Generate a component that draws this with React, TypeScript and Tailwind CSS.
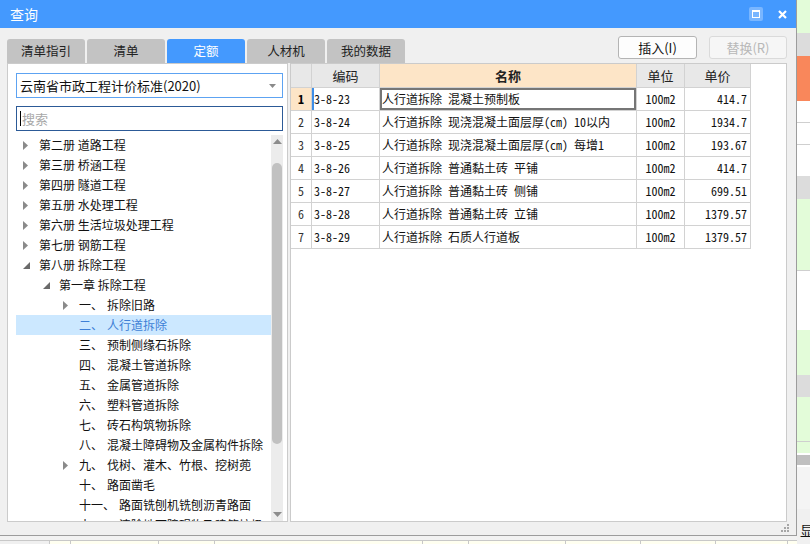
import React from 'react';

const ui = "font-['Noto_Sans_CJK_SC','Noto_Sans',sans-serif]";
const mono = "font-['Noto_Sans_Mono_CJK_SC','Liberation_Mono','Noto_Sans_CJK_SC',monospace]";

type Node = { lvl: number; arrow?: 'right' | 'down'; pre?: string; text: string; sel?: boolean };

const tree: Node[] = [
  { lvl: 0, arrow: 'right', text: '第二册 道路工程' },
  { lvl: 0, arrow: 'right', text: '第三册 桥涵工程' },
  { lvl: 0, arrow: 'right', text: '第四册 隧道工程' },
  { lvl: 0, arrow: 'right', text: '第五册 水处理工程' },
  { lvl: 0, arrow: 'right', text: '第六册 生活垃圾处理工程' },
  { lvl: 0, arrow: 'right', text: '第七册 钢筋工程' },
  { lvl: 0, arrow: 'down', text: '第八册 拆除工程' },
  { lvl: 1, arrow: 'down', text: '第一章 拆除工程' },
  { lvl: 2, arrow: 'right', pre: '一、', text: '拆除旧路' },
  { lvl: 2, pre: '二、', text: '人行道拆除', sel: true },
  { lvl: 2, pre: '三、', text: '预制侧缘石拆除' },
  { lvl: 2, pre: '四、', text: '混凝土管道拆除' },
  { lvl: 2, pre: '五、', text: '金属管道拆除' },
  { lvl: 2, pre: '六、', text: '塑料管道拆除' },
  { lvl: 2, pre: '七、', text: '砖石构筑物拆除' },
  { lvl: 2, pre: '八、', text: '混凝土障碍物及金属构件拆除' },
  { lvl: 2, arrow: 'right', pre: '九、', text: '伐树、灌木、竹根、挖树蔸' },
  { lvl: 2, pre: '十、', text: '路面凿毛' },
  { lvl: 2, pre: '十一、', text: '路面铣刨机铣刨沥青路面' },
  { lvl: 2, pre: '十二、', text: '清除地面障碍物及建筑垃圾' },
];

const rows = [
  ['3-8-23', '人行道拆除 混凝土预制板', '414.7'],
  ['3-8-24', '人行道拆除 现浇混凝土面层厚(cm) 10以内', '1934.7'],
  ['3-8-25', '人行道拆除 现浇混凝土面层厚(cm) 每增1', '193.67'],
  ['3-8-26', '人行道拆除 普通黏土砖 平铺', '414.7'],
  ['3-8-27', '人行道拆除 普通黏土砖 侧铺', '699.51'],
  ['3-8-28', '人行道拆除 普通黏土砖 立铺', '1379.57'],
  ['3-8-29', '人行道拆除 石质人行道板', '1379.57'],
];

const indent = ['pl-[7px]', 'pl-[27px]', 'pl-[47px]'];

function Arrow({ dir }: { dir?: 'right' | 'down' }) {
  return (
    <span className="w-[16px] h-[20px] flex items-center">
      {dir === 'right' && (
        <svg width="5" height="9" viewBox="0 0 5 9">
          <path d="M0 0 L5 4.5 L0 9 Z" fill="#8a8a8a" />
        </svg>
      )}
      {dir === 'down' && (
        <svg width="7" height="7" viewBox="0 0 7 7">
          <path d="M7 0 L7 7 L0 7 Z" fill="#6a6a6a" />
        </svg>
      )}
    </span>
  );
}

const tabs = ['清单指引', '清单', '定额', '人材机', '我的数据'];

const strip: [string, number][] = [
  ['bg-[#e3fcd9]', 33], ['bg-[#dcdcdc]', 23], ['bg-[#f9875b]', 45], ['bg-white border-b border-[#cfcfcf]', 22],
  ['bg-white border-b border-[#cfcfcf]', 22], ['bg-white', 31], ['bg-[#dcdcdc]', 23], ['bg-[#e3fcd9] border-b border-[#cfcfcf]', 72],
  ['bg-white', 59], ['bg-[#e3fcd9]', 45], ['bg-[#dcdcdc]', 22], ['bg-[#e3fcd9] border-b border-[#cfcfcf]', 45],
  ['bg-[#e3fcd9]', 11], ['bg-white', 2], ['bg-[#c0c0c0]', 10], ['bg-white', 2], ['bg-[#f4f4f4]', 42],
];

export default function App() {
  return (
    <div className={`w-[810px] h-[544px] overflow-hidden flex bg-[#f0f0f0] ${ui}`}>
      <div className="w-[797px] flex flex-col">
        {/* dialog */}
        <div className="h-[536px] flex flex-col border-r border-b border-[#9c9c9c] bg-[#f0f0f0]">
          <div className="h-[28px] bg-[#4499fe] flex items-center pl-[10px] pr-[9px] shrink-0">
            <span className="text-white text-[14px]">查询</span>
            <div className="ml-auto w-[14px] h-[14px] rounded-[2px] bg-[#79b6ff] flex items-center justify-center">
              <div className="w-[8px] h-[8px] border-[1.5px] border-t-[2.5px] border-white" />
            </div>
            <svg className="ml-[15px]" width="9" height="9" viewBox="0 0 9 9">
              <path d="M1 1 L8 8 M8 1 L1 8" stroke="white" strokeWidth="2.2" />
            </svg>
          </div>
          <div className="flex-1 flex flex-col pl-[7px] pr-[9px]">
            <div className="h-[35px] flex justify-between shrink-0">
              <div className="self-end flex gap-[2px]">
                {tabs.map((t, i) => (
                  <div
                    key={t}
                    className={`w-[78px] h-[24px] rounded-t-[3px] flex items-center justify-center text-[12.5px] ${
                      i === 2 ? 'bg-[#4499fe] text-white' : 'bg-[#c3c3c3] text-[#222]'
                    }`}
                  >
                    {t}
                  </div>
                ))}
              </div>
              <div className="mt-[8px] flex gap-[12px]">
                <div className="w-[79px] h-[23px] rounded-[3px] border border-[#b4b4b4] bg-[#fdfdfd] flex items-center justify-center text-[13px] text-[#111]">
                  插入(I)
                </div>
                <div className="w-[78px] h-[23px] rounded-[3px] border border-[#dadada] bg-[#f6f6f6] flex items-center justify-center text-[13px] text-[#b8b8b8]">
                  替换(R)
                </div>
              </div>
            </div>
            <div className="h-[459px] flex gap-[2px] shrink-0">
              {/* left panel */}
              <div className="w-[281px] bg-white border border-[#cbcbcb] flex flex-col pl-[8px] pr-[4px] pt-[9px] overflow-hidden">
                <div className="h-[25px] border border-[#5da3f2] flex items-center pl-[3px] pr-[6px] text-[13px] text-[#111] shrink-0">
                  <span>云南省市政工程计价标准(2020)</span>
                  <svg className="ml-auto" width="7" height="4" viewBox="0 0 7 4">
                    <path d="M0 0 L7 0 L3.5 4 Z" fill="#8a8a8a" />
                  </svg>
                </div>
                <div className="h-[25px] mt-[8px] border border-[#2c5a97] flex items-center pl-[3px] text-[13px] text-[#a8a8a8] shrink-0">
                  <span className="w-[1px] h-[15px] bg-black mr-[1px]" />
                  搜索
                </div>
                <div className="mt-[4px] flex-1 flex min-h-0">
                  <div className="flex-1 overflow-hidden">
                    {tree.map((n, i) => (
                      <div
                        key={i}
                        className={`h-[20px] flex items-center whitespace-nowrap text-[12px] ${indent[n.lvl]} ${
                          n.sel ? 'bg-[#cce8ff] text-[#3d7fd6]' : 'text-[#111]'
                        }`}
                      >
                        <Arrow dir={n.arrow} />
                        {n.pre && <span>{n.pre}</span>}
                        <span className={n.pre ? 'ml-[4px]' : ''}>{n.text}</span>
                      </div>
                    ))}
                  </div>
                  <div className="w-[12px] bg-[#ececec] flex flex-col items-center">
                    <svg className="mt-[4px]" width="9" height="5" viewBox="0 0 9 5">
                      <path d="M0 5 L4.5 0 L9 5 Z" fill="#8c8c8c" />
                    </svg>
                    <div className="mt-[19px] w-[10px] h-[281px] rounded-[5px] bg-[#c1c1c1]" />
                    <svg className="mt-auto mb-[4px]" width="9" height="5" viewBox="0 0 9 5">
                      <path d="M0 0 L9 0 L4.5 5 Z" fill="#8c8c8c" />
                    </svg>
                  </div>
                </div>
              </div>
              {/* right panel */}
              <div className="flex-1 bg-white border border-[#cbcbcb] overflow-hidden">
                <div className="grid grid-cols-[21px_68px_257px_48px_66px] w-[460px]">
                  <div className="h-[24px] bg-[#e8e8e8] border-r border-b border-[#d2d2d2]" />
                  <div className="h-[24px] bg-[#e8e8e8] border-r border-b border-[#d2d2d2] flex items-center justify-center text-[13px] text-[#222]">编码</div>
                  <div className="h-[24px] bg-[#fde5c7] border-r border-b border-[#d2d2d2] flex items-center justify-center text-[13px] font-bold text-[#222]">名称</div>
                  <div className="h-[24px] bg-[#e8e8e8] border-r border-b border-[#d2d2d2] flex items-center justify-center text-[13px] text-[#222]">单位</div>
                  <div className="h-[24px] bg-[#e8e8e8] border-r border-b border-[#d2d2d2] flex items-center justify-center text-[13px] text-[#222]">单价</div>
                  {rows.map((r, i) => (
                    <React.Fragment key={r[0]}>
                      <div
                        className={`h-[23px] border-r border-b border-[#d2d2d2] flex items-center justify-center text-[12px] ${mono} ${
                          i === 0 ? 'bg-[#fde5c7] font-bold text-black' : 'text-[#333]'
                        }`}
                      >
                        {i + 1}
                      </div>
                      <div
                        className={`h-[23px] border-r border-b border-[#d2d2d2] flex items-center pl-[2px] text-[12px] text-[#111] ${mono} ${
                          i === 0 ? 'shadow-[inset_2px_0_0_#3d8ee8]' : ''
                        }`}
                      >
                        {r[0]}
                      </div>
                      <div
                        className={`h-[23px] border-r border-b border-[#d2d2d2] flex items-center pl-[2px] whitespace-nowrap overflow-hidden text-[12px] text-[#111] ${mono} ${
                          i === 0 ? 'shadow-[inset_0_0_0_2px_#767676]' : ''
                        }`}
                      >
                        {r[1]}
                      </div>
                      <div className={`h-[23px] border-r border-b border-[#d2d2d2] flex items-center justify-center text-[12px] text-[#111] ${mono}`}>
                        100m2
                      </div>
                      <div className={`h-[23px] border-r border-b border-[#d2d2d2] flex items-center justify-end pr-[3px] text-[12px] text-[#111] ${mono}`}>
                        {r[2]}
                      </div>
                    </React.Fragment>
                  ))}
                </div>
              </div>
            </div>
            <div className="flex-1 flex justify-end items-start pt-[2px] pr-[-2px]">
              <svg width="9" height="9" viewBox="0 0 9 9" className="mr-[-3px]">
                <g fill="#a6a6a6">
                  <rect x="6" y="0" width="2" height="2" />
                  <rect x="3" y="3" width="2" height="2" />
                  <rect x="6" y="3" width="2" height="2" />
                  <rect x="0" y="6" width="2" height="2" />
                  <rect x="3" y="6" width="2" height="2" />
                  <rect x="6" y="6" width="2" height="2" />
                </g>
              </svg>
            </div>
          </div>
        </div>
        {/* background grid under dialog */}
        <div className="flex-1 flex flex-col">
          <div className="h-[5px] bg-[#f2f2f2] border-b border-[#c8c8c8]" />
          <div className="flex-1 flex bg-[#fffff0]">
            {[50, 21, 88, 56, 208, 46, 97, 75, 75, 72].map((w, i) => (
              <div key={i} style={{ width: w }} className={`border-r border-[#c8c8c8] ${i === 0 ? 'bg-[#f0f0f0]' : ''}`} />
            ))}
          </div>
        </div>
      </div>
      {/* background app strip on the right */}
      <div className="flex-1 flex flex-col">
        {strip.map(([c, h], i) => (
          <div key={i} style={{ height: h }} className={`shrink-0 ${c}`} />
        ))}
        <div className="flex-1 bg-[#f0f0f0] relative">
          <span className="absolute left-[3px] top-[14px] text-[14px] text-[#111] leading-none">显</span>
        </div>
      </div>
    </div>
  );
}
